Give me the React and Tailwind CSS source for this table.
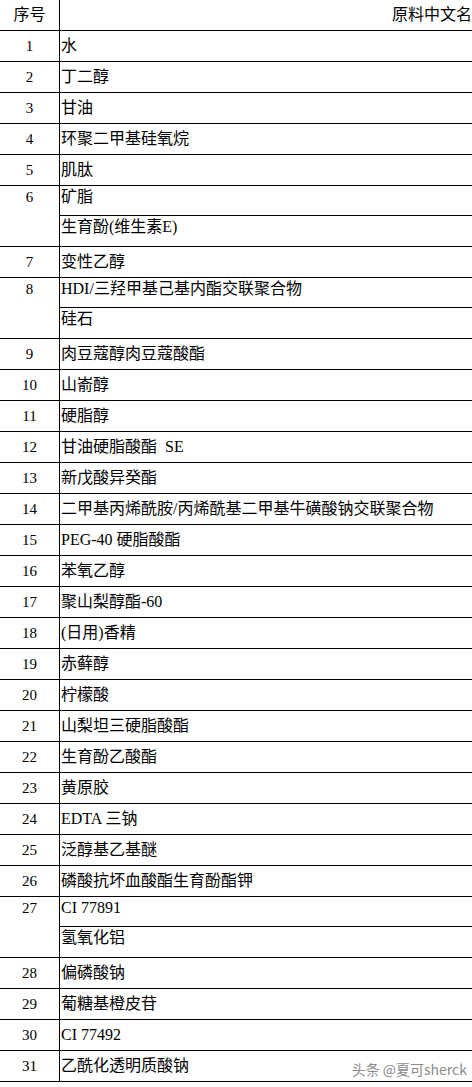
import React from "react";

const rows = [
  ["1", ["水"]],
  ["2", ["丁二醇"]],
  ["3", ["甘油"]],
  ["4", ["环聚二甲基硅氧烷"]],
  ["5", ["肌肽"]],
  ["6", ["矿脂", "生育酚(维生素E)"]],
  ["7", ["变性乙醇"]],
  ["8", ["HDI/三羟甲基己基内酯交联聚合物", "硅石"]],
  ["9", ["肉豆蔻醇肉豆蔻酸酯"]],
  ["10", ["山嵛醇"]],
  ["11", ["硬脂醇"]],
  ["12", ["甘油硬脂酸酯\u00a0\u00a0SE"]],
  ["13", ["新戊酸异癸酯"]],
  ["14", ["二甲基丙烯酰胺/丙烯酰基二甲基牛磺酸钠交联聚合物"]],
  ["15", ["PEG-40 硬脂酸酯"]],
  ["16", ["苯氧乙醇"]],
  ["17", ["聚山梨醇酯-60"]],
  ["18", ["(日用)香精"]],
  ["19", ["赤藓醇"]],
  ["20", ["柠檬酸"]],
  ["21", ["山梨坦三硬脂酸酯"]],
  ["22", ["生育酚乙酸酯"]],
  ["23", ["黄原胶"]],
  ["24", ["EDTA 三钠"]],
  ["25", ["泛醇基乙基醚"]],
  ["26", ["磷酸抗坏血酸酯生育酚酯钾"]],
  ["27", ["CI 77891", "氢氧化铝"]],
  ["28", ["偏磷酸钠"]],
  ["29", ["葡糖基橙皮苷"]],
  ["30", ["CI 77492"]],
  ["31", ["乙酰化透明质酸钠"]],
];

const font = { fontFamily: '"Liberation Serif", "Noto Sans CJK SC", serif' };

function Row({ num, names, last }) {
  const multi = names.length > 1;
  return (
    <div className="relative flex border-b border-black">
      <div
        className={
          multi
            ? "w-[60px] shrink-0 border-r border-black flex justify-center pt-[1px] text-[15px] leading-[20px]"
            : "w-[60px] shrink-0 border-r border-black flex items-center justify-center text-[15px]"
        }
      >
        {num}
      </div>
      <div className="flex-1 min-w-0">
        {names.map((name, i) => (
          <div
            key={i}
            className={
              (multi
                ? "h-[30px] flex items-start pt-[1px] leading-[20px] pl-[1px] text-[16px] whitespace-nowrap"
                : "h-[30px] flex items-center pl-[1px] text-[16px] whitespace-nowrap") +
              (i < names.length - 1 ? " border-b border-black" : "")
            }
          >
            {name}
          </div>
        ))}
      </div>
      {last && (
        <div
          className="absolute right-[5px] top-[8px] text-[14px] text-[#8c8c8c]"
          style={{ fontFamily: '"Noto Sans CJK SC", "Liberation Sans", sans-serif' }}
        >
          头条 @夏可sherck
        </div>
      )}
    </div>
  );
}

export default function App() {
  return (
    <div className="w-[472px] bg-white text-black overflow-hidden" style={font}>
      <div className="flex border-b border-black h-[31px]">
        <div className="w-[60px] shrink-0 border-r border-black flex items-center justify-center text-[16px]">
          序号
        </div>
        <div className="flex-1 flex items-center justify-end text-[16px] whitespace-nowrap">
          原料中文名
        </div>
      </div>
      {rows.map(([num, names], i) => (
        <Row key={num} num={num} names={names} last={i === rows.length - 1} />
      ))}
    </div>
  );
}
